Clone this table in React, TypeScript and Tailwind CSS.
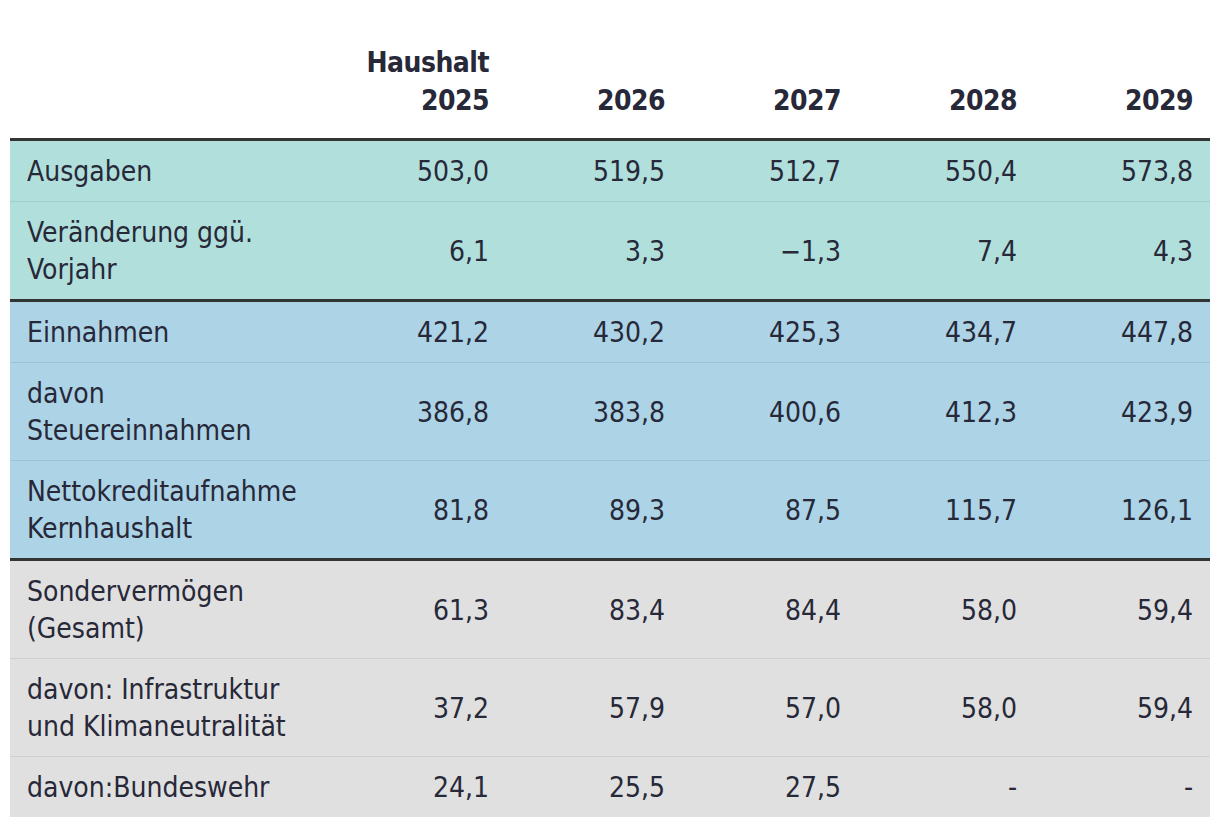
import React from "react";

type Row = { label: React.ReactNode; values: string[]; tone: "teal" | "blue" | "grey"; breakAfter?: boolean };

const rows: Row[] = [
  { label: "Ausgaben", values: ["503,0", "519,5", "512,7", "550,4", "573,8"], tone: "teal" },
  { label: <>Veränderung ggü.<br />Vorjahr</>, values: ["6,1", "3,3", "−1,3", "7,4", "4,3"], tone: "teal", breakAfter: true },
  { label: "Einnahmen", values: ["421,2", "430,2", "425,3", "434,7", "447,8"], tone: "blue" },
  { label: <>davon<br />Steuereinnahmen</>, values: ["386,8", "383,8", "400,6", "412,3", "423,9"], tone: "blue" },
  { label: <>Nettokreditaufnahme<br />Kernhaushalt</>, values: ["81,8", "89,3", "87,5", "115,7", "126,1"], tone: "blue", breakAfter: true },
  { label: <>Sondervermögen<br />(Gesamt)</>, values: ["61,3", "83,4", "84,4", "58,0", "59,4"], tone: "grey" },
  { label: <>davon: Infrastruktur<br />und Klimaneutralität</>, values: ["37,2", "57,9", "57,0", "58,0", "59,4"], tone: "grey" },
  { label: "davon:Bundeswehr", values: ["24,1", "25,5", "27,5", "-", "-"], tone: "grey" },
];

const toneBg = {
  teal: "bg-[#b1dfdb]",
  blue: "bg-[#acd3e6]",
  grey: "bg-[#e0e0e0]",
};
const toneLine = {
  teal: "border-[#9fcfcb]",
  blue: "border-[#9bc3d7]",
  grey: "border-[#cfcfcf]",
};

export default function App() {
  return (
    <div className="bg-white min-h-[828px] px-[10px] pt-[44px] font-['Liberation_Sans_Narrow','DejaVu_Sans_Condensed',sans-serif] text-[#272838]">
      <table className="w-[1200px] border-collapse table-fixed">
        <colgroup>
          <col className="w-[320px]" />
          <col className="w-[176px]" />
          <col className="w-[176px]" />
          <col className="w-[176px]" />
          <col className="w-[176px]" />
          <col className="w-[176px]" />
        </colgroup>
        <thead>
          <tr className="border-b-[3px] border-[#333535]">
            <th />
            {[<>Haushalt<br />2025</>, "2026", "2027", "2028", "2029"].map((h, i) => (
              <th key={i} className="text-right align-bottom font-bold text-[28px] leading-[38px] tracking-[-0.5px] pr-[17px] pb-[18px]">
                {h}
              </th>
            ))}
          </tr>
        </thead>
        <tbody>
          {rows.map((r, i) => (
            <tr
              key={i}
              className={`${toneBg[r.tone]} ${
                r.breakAfter ? "border-b-[3px] border-[#333535]" : `border-b ${toneLine[r.tone]}`
              } ${i === rows.length - 1 ? "border-b-0" : ""}`}
            >
              <td className="text-left text-[28px] leading-[37px] pl-[17px] pt-[12px] pb-[11px]">{r.label}</td>
              {r.values.map((v, j) => (
                <td key={j} className="text-right text-[28px] leading-[37px] pr-[17px] pt-[12px] pb-[11px]">
                  {v}
                </td>
              ))}
            </tr>
          ))}
        </tbody>
      </table>
    </div>
  );
}
